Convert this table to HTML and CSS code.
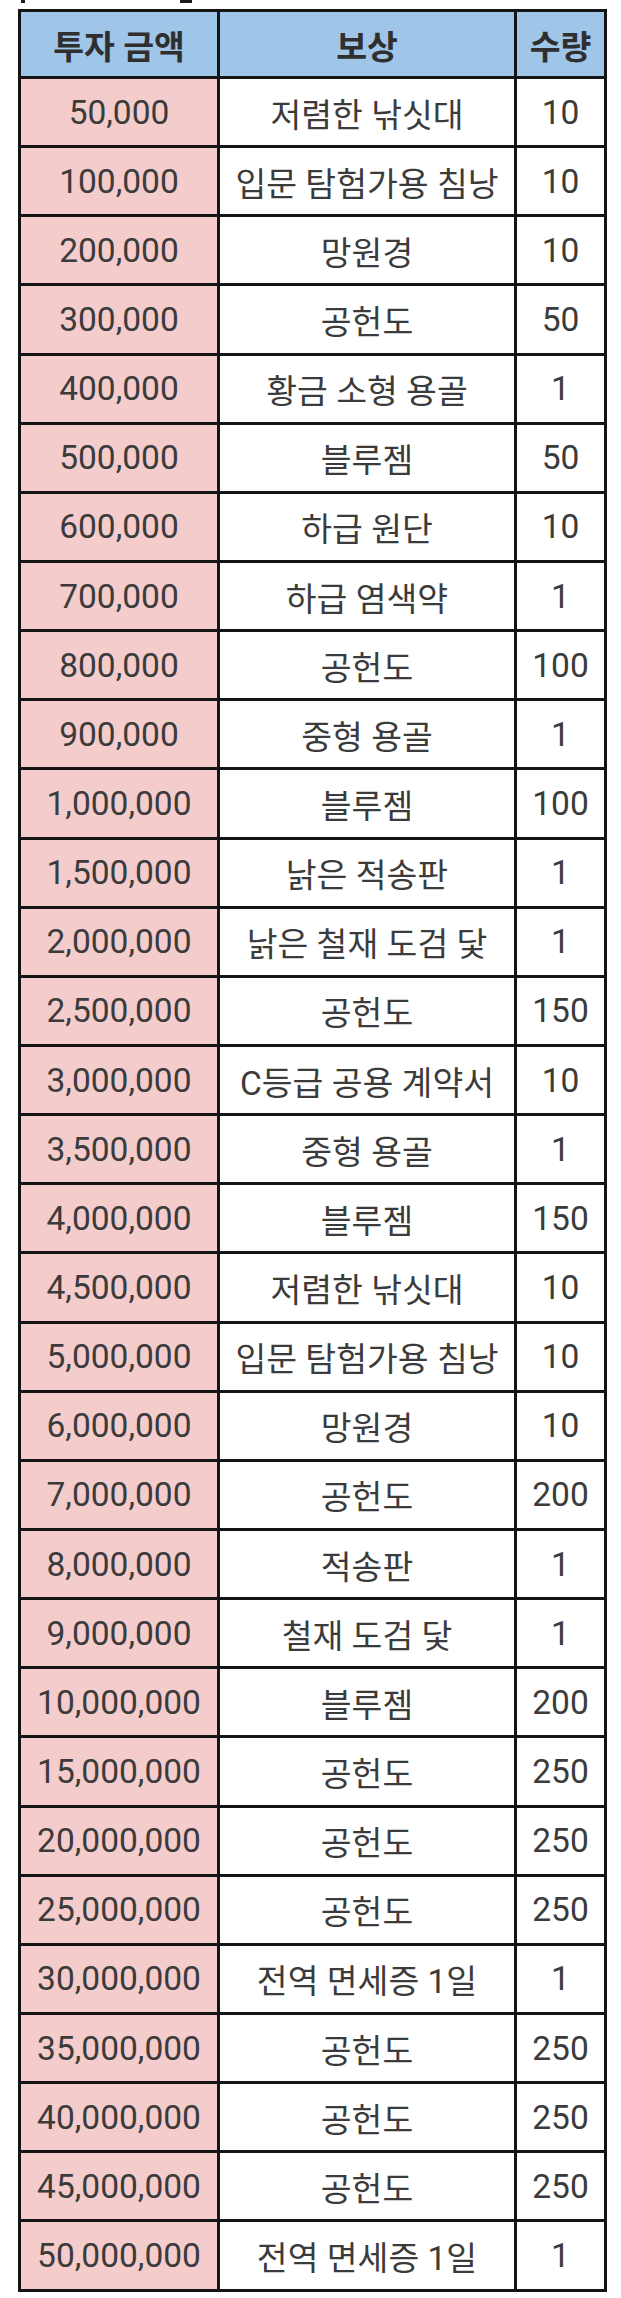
FILE: index.html
```html
<!DOCTYPE html>
<html lang="ko">
<head>
<meta charset="utf-8">
<title>투자 보상</title>
<link rel="stylesheet" href="styles.css">
</head>
<body>
<div class="cut-title"><span class="mark mark-left"></span><span class="mark mark-right"></span></div>
<div class="sheet">
  <div class="cell head">투자 금액</div><div class="cell head">보상</div><div class="cell head">수량</div>
  <div class="cell amt">50,000</div><div class="cell">저렴한 낚싯대</div><div class="cell">10</div>
  <div class="cell amt">100,000</div><div class="cell">입문 탐험가용 침낭</div><div class="cell">10</div>
  <div class="cell amt">200,000</div><div class="cell">망원경</div><div class="cell">10</div>
  <div class="cell amt">300,000</div><div class="cell">공헌도</div><div class="cell">50</div>
  <div class="cell amt">400,000</div><div class="cell">황금 소형 용골</div><div class="cell">1</div>
  <div class="cell amt">500,000</div><div class="cell">블루젬</div><div class="cell">50</div>
  <div class="cell amt">600,000</div><div class="cell">하급 원단</div><div class="cell">10</div>
  <div class="cell amt">700,000</div><div class="cell">하급 염색약</div><div class="cell">1</div>
  <div class="cell amt">800,000</div><div class="cell">공헌도</div><div class="cell">100</div>
  <div class="cell amt">900,000</div><div class="cell">중형 용골</div><div class="cell">1</div>
  <div class="cell amt">1,000,000</div><div class="cell">블루젬</div><div class="cell">100</div>
  <div class="cell amt">1,500,000</div><div class="cell">낡은 적송판</div><div class="cell">1</div>
  <div class="cell amt">2,000,000</div><div class="cell">낡은 철재 도검 닻</div><div class="cell">1</div>
  <div class="cell amt">2,500,000</div><div class="cell">공헌도</div><div class="cell">150</div>
  <div class="cell amt">3,000,000</div><div class="cell">C등급 공용 계약서</div><div class="cell">10</div>
  <div class="cell amt">3,500,000</div><div class="cell">중형 용골</div><div class="cell">1</div>
  <div class="cell amt">4,000,000</div><div class="cell">블루젬</div><div class="cell">150</div>
  <div class="cell amt">4,500,000</div><div class="cell">저렴한 낚싯대</div><div class="cell">10</div>
  <div class="cell amt">5,000,000</div><div class="cell">입문 탐험가용 침낭</div><div class="cell">10</div>
  <div class="cell amt">6,000,000</div><div class="cell">망원경</div><div class="cell">10</div>
  <div class="cell amt">7,000,000</div><div class="cell">공헌도</div><div class="cell">200</div>
  <div class="cell amt">8,000,000</div><div class="cell">적송판</div><div class="cell">1</div>
  <div class="cell amt">9,000,000</div><div class="cell">철재 도검 닻</div><div class="cell">1</div>
  <div class="cell amt">10,000,000</div><div class="cell">블루젬</div><div class="cell">200</div>
  <div class="cell amt">15,000,000</div><div class="cell">공헌도</div><div class="cell">250</div>
  <div class="cell amt">20,000,000</div><div class="cell">공헌도</div><div class="cell">250</div>
  <div class="cell amt">25,000,000</div><div class="cell">공헌도</div><div class="cell">250</div>
  <div class="cell amt">30,000,000</div><div class="cell">전역 면세증 1일</div><div class="cell">1</div>
  <div class="cell amt">35,000,000</div><div class="cell">공헌도</div><div class="cell">250</div>
  <div class="cell amt">40,000,000</div><div class="cell">공헌도</div><div class="cell">250</div>
  <div class="cell amt">45,000,000</div><div class="cell">공헌도</div><div class="cell">250</div>
  <div class="cell amt">50,000,000</div><div class="cell">전역 면세증 1일</div><div class="cell">1</div>
</div>
</body>
</html>
```
FILE: styles.css
```css
html, body {
  margin: 0;
  padding: 0;
  background: #ffffff;
}
body {
  font-family: Roboto, "Noto Sans CJK KR", sans-serif;
  color: #3b3b3b;
}
.cut-title {
  height: 9px;
  display: flex;
  align-items: flex-start;
}
.mark {
  display: block;
  height: 3px;
  background: #1a1a1a;
}
.mark-left {
  width: 4px;
  margin-left: 21px;
}
.mark-right {
  width: 12px;
  margin-left: 155px;
}
.sheet {
  margin-left: 18px;
  width: 589px;
  box-sizing: border-box;
  display: grid;
  grid-template-columns: 196px 294px 87px;
  grid-template-rows: 64px;
  grid-auto-rows: 66.15px;
  gap: 3px;
  padding: 3px;
  background: #141414;
}
.cell {
  display: flex;
  align-items: center;
  justify-content: center;
  background: #ffffff;
  font-size: 33.5px;
  white-space: nowrap;
}
.head {
  background: #9fc5e8;
  font-weight: 700;
  color: #2f2f2f;
  font-size: 33.5px;
}
.amt {
  background: #f4cccc;
}
```
